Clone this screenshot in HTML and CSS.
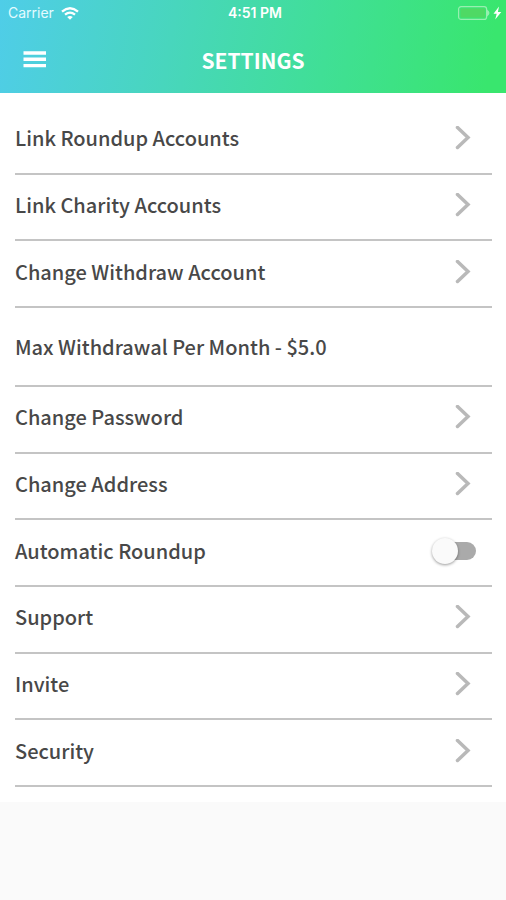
FILE: index.html
```html
<!DOCTYPE html>
<html lang="en">
<head>
<meta charset="utf-8">
<meta name="viewport" content="width=device-width, initial-scale=1">
<title>Settings</title>
<link rel="stylesheet" href="styles.css">
</head>
<body>
<svg class="sprite" aria-hidden="true">
  <symbol id="chevron" viewBox="0 0 16 24"><path d="M2.500 1.500 13 11.500 2.500 21.500" fill="none" stroke="currentColor" stroke-width="3.500" stroke-linecap="round"/></symbol>
</svg>
<header class="header">
  <div class="status">
    <div class="carrier">
      <span>Carrier</span>
      <svg width="18" height="13" viewBox="0 0 18 13" fill="none" stroke="#fff" stroke-width="2.300"><path d="M1 4.600Q9-2.200 17 4.600M4 7.700Q9 3.500 14 7.700"/><path d="M9 12.800 6.200 10Q9 7.800 11.800 10Z" fill="#fff" stroke="none"/></svg>
    </div>
    <span class="time">4:51 PM</span>
    <div class="power">
      <svg width="44" height="16" viewBox="0 0 44 16"><rect x=".6" y="1.600" width="28" height="12.800" rx="2.500" fill="none" stroke="#98efb0" stroke-width="1.200"/><rect x="2.500" y="3.500" width="24.500" height="9" rx="1" fill="#4fd964"/><path d="M29 4.500Q34 8 29 11.500Z" fill="#98efb0"/><path d="M41 1.500 35.500 8.800H38.700L37.200 14.500 43.300 7H39.900Z" fill="#fff"/></svg>
    </div>
  </div>
  <div class="bar">
    <button class="menu" type="button" aria-label="Menu"><svg width="24" height="18" viewBox="0 0 24 18"><path d="M.5 2h22.500M.5 8.300h22.500M.5 14.600h22.500" stroke="#fff" stroke-width="3.400"/></svg></button>
    <h1 class="title">SETTINGS</h1>
  </div>
</header>
<main class="panel">
  <ul class="list">
    <li><a class="row" href="#roundup">Link Roundup Accounts<svg class="chevron"><use href="#chevron"/></svg></a></li>
    <li><a class="row" href="#charity">Link Charity Accounts<svg class="chevron"><use href="#chevron"/></svg></a></li>
    <li><a class="row" href="#withdraw">Change Withdraw Account<svg class="chevron"><use href="#chevron"/></svg></a></li>
    <li><div class="row limit">Max Withdrawal Per Month - $5.0</div></li>
    <li><a class="row" href="#password">Change Password<svg class="chevron"><use href="#chevron"/></svg></a></li>
    <li><a class="row" href="#address">Change Address<svg class="chevron"><use href="#chevron"/></svg></a></li>
    <li><div class="row"><label for="auto">Automatic Roundup</label><input class="switch" id="auto" type="checkbox" role="switch"></div></li>
    <li><a class="row" href="#support">Support<svg class="chevron"><use href="#chevron"/></svg></a></li>
    <li><a class="row" href="#invite">Invite<svg class="chevron"><use href="#chevron"/></svg></a></li>
    <li><a class="row" href="#security">Security<svg class="chevron"><use href="#chevron"/></svg></a></li>
  </ul>
</main>
</body>
</html>
```
FILE: styles.css
```css
* { box-sizing: border-box; }
body {
  margin: 0;
  background: #fafafa;
  color: #484848;
  font-family: "Noto Sans CJK SC", "Noto Sans", sans-serif;
}
.sprite { position: absolute; width: 0; height: 0; }
svg { display: block; flex: none; }
.header {
  padding-bottom: 7px;
  background: linear-gradient(100deg, #4fcde8 0%, #48d6bd 34%, #40df96 64%, #39e66e 96%);
  color: #fff;
}
.status {
  display: grid;
  grid-template-columns: 1fr auto 1fr;
  align-items: center;
  height: 26px;
  padding: 0 4px 0 8px;
  font: 14px/26px Inter, sans-serif;
}
.carrier { display: flex; align-items: center; gap: 7px; color: #e4fbff; }
.time { font-weight: 600; }
.power { display: flex; justify-content: flex-end; }
.bar {
  display: grid;
  grid-template-columns: 24px 1fr 24px;
  align-items: center;
  height: 60px;
  padding: 8px 23px 0;
}
.menu { padding: 0; border: 0; background: none; }
.title {
  margin: 0;
  text-align: center;
  font-size: 21px;
  line-height: 32px;
  font-weight: 700;
}
.panel { padding: 15px 14px 15px 15px; background: #fff; }
.list {
  display: grid;
  grid-template-rows: repeat(3, 1fr) 79px repeat(6, 1fr);
  min-height: 679px;
  margin: 0;
  padding: 0;
  list-style: none;
}
.list li { display: grid; border-bottom: 2px solid #c4c4c4; }
.row {
  display: flex;
  align-items: center;
  justify-content: space-between;
  padding: 0 16px 4px 0;
  color: inherit;
  text-decoration: none;
  font-size: 20px;
  line-height: 30px;
  font-weight: 500;
}
.limit { padding: 2px 0 0; }
.chevron { width: 16px; height: 24px; margin-right: 5px; color: #b9b9b9; }
.switch {
  appearance: none;
  display: flex;
  align-items: center;
  width: 42px;
  height: 18px;
  margin: 0;
  border-radius: 9px;
  background: linear-gradient(#aaa, #aaa) right / 28px 18px no-repeat;
}
.switch::before {
  content: "";
  flex: none;
  width: 26px;
  height: 26px;
  margin-left: -2px;
  border-radius: 50%;
  background: #fafafa;
  box-shadow: 0 1px 3px rgba(0, 0, 0, .4);
}
.switch:checked { justify-content: flex-end; }
```
